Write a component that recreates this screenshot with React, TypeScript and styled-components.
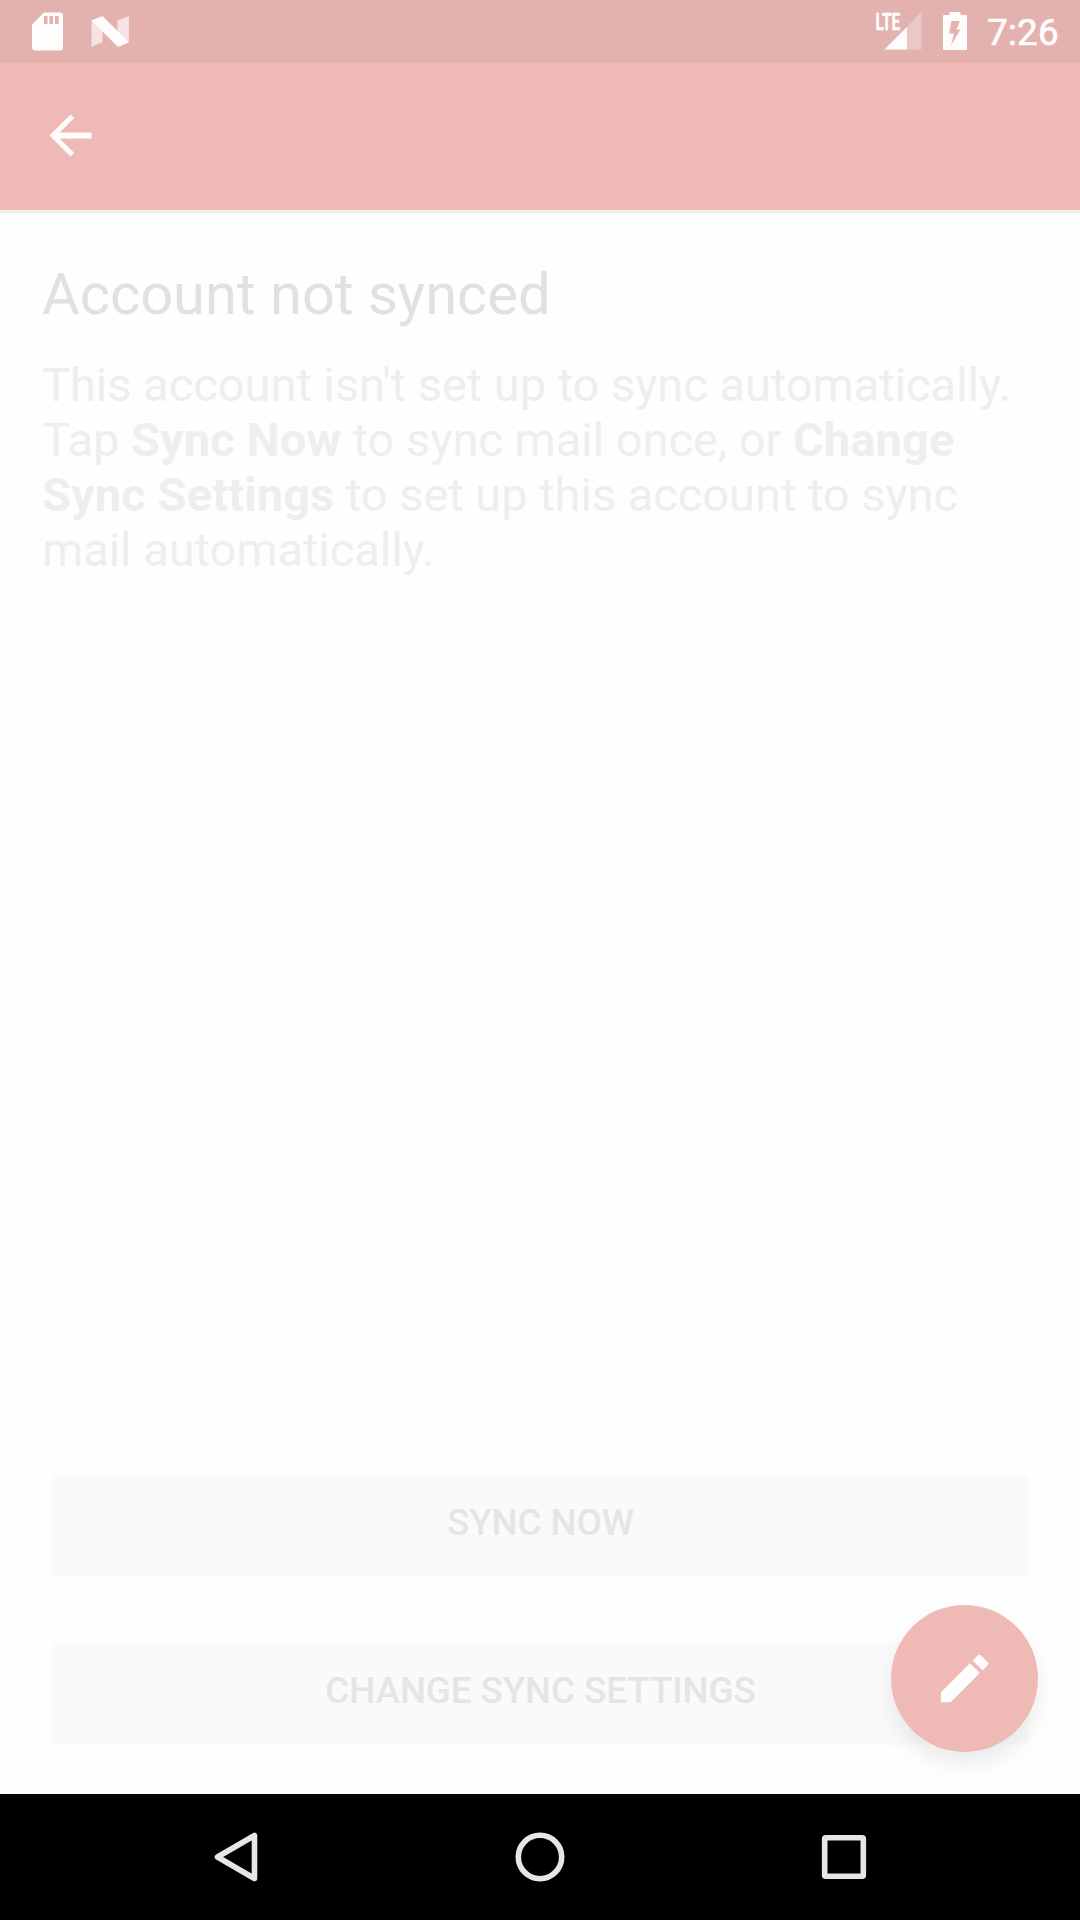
import React from 'react';
import styled, { createGlobalStyle } from 'styled-components';

const GlobalStyle = createGlobalStyle`
  *, *::before, *::after { box-sizing: border-box; }
  body { margin: 0; background: #fefefe; }
`;

const Screen = styled.div`
  display: flex;
  flex-direction: column;
  width: 1080px;
  height: 1920px;
  background: #fefefe;
  font-family: Roboto, "Noto Sans", sans-serif;
  overflow: hidden;
`;

const StatusBar = styled.header`
  display: flex;
  flex: none;
  align-items: flex-start;
  justify-content: space-between;
  height: 63px;
  padding: 0 21px 0 32px;
  background: #e3b2ae;
  color: #fffdfc;
`;

const StatusGroup = styled.div<{ $gap: number }>`
  display: flex;
  align-items: flex-start;
  gap: ${({ $gap }) => $gap}px;
`;

const Glyph = styled.svg<{ $top?: number }>`
  display: block;
  flex: none;
  margin-top: ${({ $top = 0 }) => $top}px;
  fill: currentColor;
  overflow: visible;
`;

const NetworkLabel = styled.text`
  font-size: 24px;
  font-weight: 700;
  stroke: currentColor;
  stroke-width: 0.6px;
`;

const Clock = styled.time`
  margin-left: -2px;
  padding-top: 12px;
  font-size: 36.75px;
  font-weight: 400;
  letter-spacing: 0.3px;
  line-height: 42px;
  -webkit-text-stroke: 0.7px currentColor;
`;

const AppBar = styled.nav`
  display: flex;
  flex: none;
  align-items: center;
  height: 147px;
  padding: 0 0 2px 39px;
  background: #efb9b6;
  color: #fffdfc;
  box-shadow: 0 3px 1px #eef3f2;
`;

const BarButton = styled.button`
  padding: 0;
  border: 0;
  background: none;
  color: inherit;
`;

const Content = styled.main`
  display: flex;
  flex: 1;
  flex-direction: column;
  justify-content: space-between;
  padding: 50px 51px 49px 42px;
`;

const Title = styled.h1`
  margin: 0 0 29px;
  color: #e1e1e1;
  font-size: 57.75px;
  font-weight: 400;
  line-height: 68px;
`;

const Message = styled.p`
  margin: 0;
  color: #eeeeee;
  font-size: 47px;
  line-height: 55px;
  letter-spacing: -0.03px;
  white-space: nowrap;

  b {
    letter-spacing: 0.1px;
  }
`;

const Actions = styled.div`
  display: flex;
  flex-direction: column;
  gap: 65px;
  padding-left: 10px;
`;

const ActionButton = styled.button`
  height: 103px;
  padding: 0 0 5px;
  border: 0;
  border-radius: 5px;
  background: #fafafa;
  color: #e5e5e5;
  font-family: inherit;
  font-size: 36.75px;
  font-weight: 500;
  letter-spacing: -0.08px;
  line-height: 44px;
  text-transform: uppercase;
`;

const ComposeButton = styled.button`
  position: absolute;
  top: 1605px;
  left: 891px;
  display: grid;
  place-items: center;
  width: 147px;
  height: 147px;
  padding: 0;
  border: 0;
  border-radius: 50%;
  background: #efb9b6;
  color: #fffefe;
  box-shadow: 0 12px 22px rgba(0, 0, 0, 0.08);
`;

const SystemNav = styled.footer`
  display: flex;
  flex: none;
  align-items: center;
  justify-content: space-between;
  height: 126px;
  padding: 0 208px;
  background: #000;
  color: #e6e6e6;
`;

const NavGlyph = styled.svg`
  display: block;
  fill: none;
  stroke: currentColor;
  stroke-width: 5.6;
  stroke-linejoin: round;
`;

export default function App() {
  return (
    <>
      <GlobalStyle />
      <Screen>
        <StatusBar>
          <StatusGroup $gap={28}>
            <Glyph $top={12} width="31" height="39" viewBox="0 0 31 39">
              <path fillRule="evenodd" d="M12 .5h15.5a3.5 3.5 0 0 1 3.5 3.5v31a3.5 3.5 0 0 1-3.5 3.5h-24A3.5 3.5 0 0 1 0 35V12.5zM12 4v8h3.5V4zm5.5 0v8H21V4zM23 4v8h3.700V4z" />
            </Glyph>
            <Glyph $top={16} width="38" height="31" viewBox="0 0 38 31">
              <path opacity=".65" d="M0.500 4L11.500 12v14L.5 31zM26.500 4.500L38 0v26L26.500 17z" />
              <path d="M.5 4.500L11.500 0L38 26.500L27 31z" />
            </Glyph>
          </StatusGroup>
          <StatusGroup $gap={22}>
            <Glyph $top={12} width="46" height="38" viewBox="0 0 46 38">
              <path opacity=".3" d="M46.500 0v37.500H32V15z" />
              <path d="M32 15v22.500H9.500z" />
              <NetworkLabel x="0.500" y="18" textLength="24.500" lengthAdjust="spacingAndGlyphs">LTE</NetworkLabel>
            </Glyph>
            <Glyph $top={12} width="24" height="38" viewBox="0 0 24 38">
              <path fillRule="evenodd" d="M6.500 0h11v3H23a1 1 0 0 1 1 1v33a1 1 0 0 1-1 1H1a1 1 0 0 1-1-1V4a1 1 0 0 1 1-1h5.500zM8.500 9L6 21.500h5L8 33l9.500-15.500H13.500L17 9z" />
            </Glyph>
            <Clock>7:26</Clock>
          </StatusGroup>
        </StatusBar>
        <AppBar>
          <BarButton aria-label="Back">
            <Glyph width="63" height="63" viewBox="0 0 24 24">
              <path d="M20 10.900H7.830l5.590-5.490L12 4l-8 8 8 8 1.410-1.410L7.830 13.100H20z" />
            </Glyph>
          </BarButton>
        </AppBar>
        <Content>
          <div>
            <Title>Account not synced</Title>
            <Message>
              This account isn't set up to sync automatically.<br />
              Tap <b>Sync Now</b> to sync mail once, or <b>Change</b><br />
              <b>Sync Settings</b> to set up this account to sync<br />
              mail automatically.
            </Message>
          </div>
          <Actions>
            <ActionButton>Sync now</ActionButton>
            <ActionButton>Change sync settings</ActionButton>
          </Actions>
        </Content>
        <SystemNav>
          <NavGlyph width="56" height="56" viewBox="0 0 56 56">
            <path d="M9.500 28L46.500 6.500v43z" />
          </NavGlyph>
          <NavGlyph width="56" height="56" viewBox="0 0 56 56">
            <circle cx="28" cy="28" r="21.700" />
          </NavGlyph>
          <NavGlyph width="56" height="56" viewBox="0 0 56 56">
            <rect x="8.700" y="8.700" width="38.600" height="38.600" rx="1" />
          </NavGlyph>
        </SystemNav>
        <ComposeButton aria-label="Compose">
          <Glyph width="63" height="63" viewBox="0 0 24 24">
            <path d="M3 17.250V21h3.750L17.810 9.940l-3.750-3.750zM20.710 7.040a1 1 0 0 0 0-1.410l-2.340-2.340a1 1 0 0 0-1.410 0l-1.830 1.830 3.750 3.750z" />
          </Glyph>
        </ComposeButton>
      </Screen>
    </>
  );
}
